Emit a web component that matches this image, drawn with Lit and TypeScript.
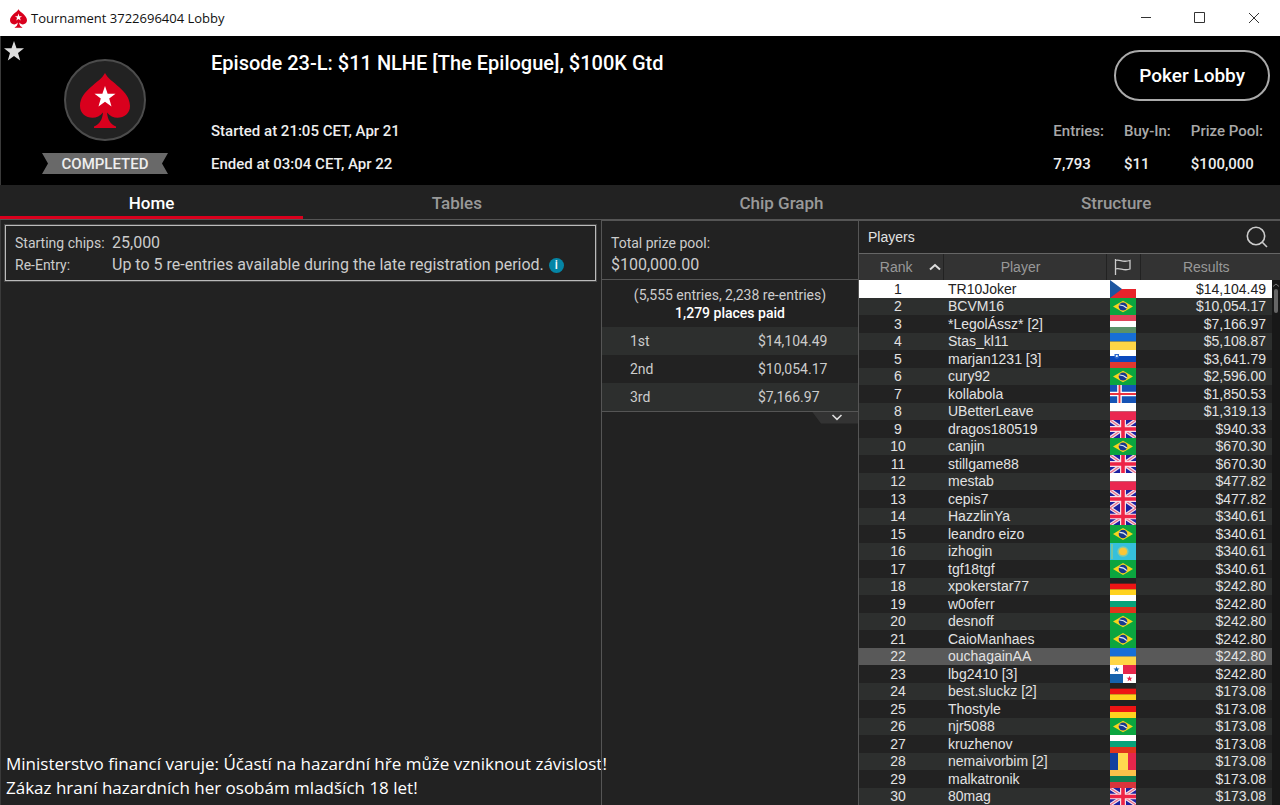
import { LitElement, html, svg, css, TemplateResult } from "lit";
import { customElement, property, state } from "lit/decorators.js";
import { classMap } from "lit/directives/class-map.js";

type Player = [name: string, flag: string, result: string];

const PLAYERS: Player[] = [
  ["TR10Joker", "cz", "$14,104.49"],
  ["BCVM16", "br", "$10,054.17"],
  ["*LegolÁssz* [2]", "hu", "$7,166.97"],
  ["Stas_kl11", "ua", "$5,108.87"],
  ["marjan1231 [3]", "si", "$3,641.79"],
  ["cury92", "br", "$2,596.00"],
  ["kollabola", "is", "$1,850.53"],
  ["UBetterLeave", "pl", "$1,319.13"],
  ["dragos180519", "gb", "$940.33"],
  ["canjin", "br", "$670.30"],
  ["stillgame88", "gb", "$670.30"],
  ["mestab", "pl", "$477.82"],
  ["cepis7", "gb", "$477.82"],
  ["HazzlinYa", "gb", "$340.61"],
  ["leandro eizo", "br", "$340.61"],
  ["izhogin", "kz", "$340.61"],
  ["tgf18tgf", "br", "$340.61"],
  ["xpokerstar77", "de", "$242.80"],
  ["w0oferr", "bg", "$242.80"],
  ["desnoff", "br", "$242.80"],
  ["CaioManhaes", "br", "$242.80"],
  ["ouchagainAA", "ua", "$242.80"],
  ["lbg2410 [3]", "pa", "$242.80"],
  ["best.sluckz [2]", "de", "$173.08"],
  ["Thostyle", "de", "$173.08"],
  ["njr5088", "br", "$173.08"],
  ["kruzhenov", "bg", "$173.08"],
  ["nemaivorbim [2]", "ro", "$173.08"],
  ["malkatronik", "lt", "$173.08"],
  ["80mag", "gb", "$173.08"],
];

const bands = (a: string, b: string, c: string) => svg`
  <rect width="26" height="6" fill=${a}></rect>
  <rect y="6" width="26" height="6" fill=${b}></rect>
  <rect y="12" width="26" height="6" fill=${c}></rect>`;

const halves = (a: string, b: string) => svg`
  <rect width="26" height="9" fill=${a}></rect>
  <rect y="9" width="26" height="9" fill=${b}></rect>`;

const FLAGS: Record<string, TemplateResult<2>> = {
  cz: svg`${halves("#ffffff", "#e8232b")}<path d="M0 0L12 9L0 18Z" fill="#1d56a0"></path>`,
  br: svg`
    <rect width="26" height="18" fill="#0ba53f"></rect>
    <path d="M3 9L13 3L23 9L13 15Z" fill="#f7d51d"></path>
    <circle cx="13" cy="9" r="4.3" fill="#17398f"></circle>
    <path d="M9.3 7.4Q13.5 7.2 16.8 10.6" stroke="#dfe8ee" stroke-width="1.2" fill="none"></path>`,
  hu: bands("#e0445a", "#ffffff", "#5a9168"),
  ua: halves("#176fd6", "#ffd646"),
  si: svg`${bands("#ffffff", "#0b49bd", "#e0382f")}
    <path d="M4.5 4H9V7.5Q6.8 10 4.5 7.5Z" fill="#2d69cf"></path>
    <circle cx="6.8" cy="6" r="1.1" fill="#ffffff"></circle>`,
  is: svg`
    <rect width="26" height="18" fill="#1553b5"></rect>
    <path d="M9.5 0V18M0 9H26" stroke="#ffffff" stroke-width="4.6"></path>
    <path d="M9.5 0V18M0 9H26" stroke="#ef3340" stroke-width="1.9"></path>`,
  pl: halves("#ffffff", "#ea2850"),
  gb: svg`
    <rect width="26" height="18" fill="#1c20a0"></rect>
    <path d="M0 0L26 18M26 0L0 18" stroke="#f3e3ee" stroke-width="3.6"></path>
    <path d="M0 0L26 18M26 0L0 18" stroke="#ea6d86" stroke-width="1.2"></path>
    <path d="M13 0V18M0 9H26" stroke="#f7dfe8" stroke-width="6"></path>
    <path d="M13 0V18M0 9H26" stroke="#ee2346" stroke-width="3.6"></path>`,
  kz: svg`
    <rect width="26" height="18" fill="#35c0dc"></rect>
    <path d="M2 1V17" stroke="#8fc78a" stroke-width="1.4"></path>
    <circle cx="13" cy="9" r="5.6" fill="#86c9a4"></circle>
    <circle cx="13" cy="9" r="4" fill="#fbc637"></circle>`,
  de: bands("#222222", "#ee1414", "#ffd21f"),
  bg: bands("#ffffff", "#07a37a", "#e0341c"),
  pa: svg`
    <rect width="26" height="18" fill="#ffffff"></rect>
    <path d="M13 0H26V9H13Z" fill="#e6264b"></path>
    <path d="M0 9H13V18H0Z" fill="#1562ad"></path>
    <path d="M6.5 1.5L7.3 3.6H9.5L7.8 4.9L8.4 7L6.5 5.7L4.6 7L5.2 4.9L3.5 3.6H5.7Z" fill="#1562ad"></path>
    <path d="M19.5 10.7L20.3 12.8H22.5L20.8 14.1L21.4 16.2L19.5 14.9L17.6 16.2L18.2 14.1L16.5 12.8H18.7Z" fill="#e6264b"></path>`,
  ro: svg`
    <rect width="9" height="18" fill="#12409f"></rect>
    <rect x="8" width="10" height="18" fill="#ffd94f"></rect>
    <rect x="18" width="8" height="18" fill="#e6264b"></rect>`,
  lt: bands("#fcc24a", "#12804f", "#d8343c"),
};

const SPADE = "M25 0C30 10 50 17 50 33C50 45 34 49 27 39.500C27.500 46 30 51 36 53.500V55H14V53.500C20 51 22.500 46 23 39.500C16 49 0 45 0 33C0 17 20 10 25 0Z";
const STAR = "M10 0L12.500 7.300H20L14 11.900L16.200 19.500L10 15L3.800 19.500L6 11.900L0 7.300H7.500Z";

@customElement("spade-logo")
export class SpadeLogo extends LitElement {
  static styles = css`
    :host { display: block; }
    svg { display: block; width: 100%; height: 100%; }
  `;
  render() {
    return html`<svg viewBox="0 0 50 55" aria-hidden="true">
      <path d=${SPADE} fill="#d9001d"></path>
      <path d=${STAR} fill="#fff" transform="translate(14.500 13) scale(1.050)"></path>
    </svg>`;
  }
}

@customElement("title-bar")
export class TitleBar extends LitElement {
  static styles = css`
    :host {
      display: flex; align-items: center; height: 36px; background: #fff; color: #111;
      font: 13px/20px "Open Sans", "Noto Sans", sans-serif;
    }
    .logo { width: 17px; height: 19px; margin: 0 4px 0 10px; }
    h1 { flex: 1; margin: 0; font: inherit; }
    button { width: 54px; height: 36px; padding: 0 0 0 2px; border: 0; background: none; display: grid; place-items: center; }
    svg { width: 12px; height: 12px; fill: none; stroke: #333; }
  `;
  render() {
    return html`
      <spade-logo class="logo"></spade-logo>
      <h1>Tournament 3722696404 Lobby</h1>
      <button aria-label="Minimize"><svg viewBox="0 0 12 12"><path d="M1 5.500H11"></path></svg></button>
      <button aria-label="Maximize"><svg viewBox="0 0 12 12"><path d="M.5 .5H10.500V10.500H.5Z"></path></svg></button>
      <button aria-label="Close"><svg viewBox="0 0 12 12"><path d="M1 1L11 11M11 1L1 11"></path></svg></button>
    `;
  }
}

@customElement("lobby-header")
export class LobbyHeader extends LitElement {
  static styles = css`
    :host {
      position: relative;
      display: grid; grid-template-columns: 208px 1fr auto;
      box-sizing: border-box; height: 149px; padding-right: 10px;
      border-left: 1px solid #3a3a3a;
      background: #000; color: #eee;
      font: 500 15px/20px Roboto, sans-serif;
    }
    .fav { position: absolute; left: 2px; top: 4px; width: 22px; height: 22px; padding: 1px; border: 0; background: none; }
    .fav svg { display: block; width: 20px; height: 20px; fill: #ddd; }
    .badge { display: flex; flex-direction: column; align-items: center; padding-top: 23px; }
    .disc {
      display: grid; place-items: center; box-sizing: border-box;
      width: 82px; height: 82px; border: 2px solid #4c4c4c; border-radius: 50%; background: #222;
    }
    .disc spade-logo { width: 50px; height: 55px; }
    .ribbon {
      width: 126px; margin-top: 12px; padding-top: 1px; text-align: center; background: #696969;
      clip-path: polygon(0 0, 100% 0, calc(100% - 6px) 50%, 100% 100%, 0 100%, 6px 50%);
    }
    .info { padding: 13px 0 0 2px; }
    h2 { margin: 0 0 44px; font: 500 20px/28px Roboto, sans-serif; color: #fff; }
    p { margin: 0 0 13px; }
    .side { padding-top: 14px; display: flex; flex-direction: column; align-items: flex-end; }
    .lobby {
      height: 51px; padding: 0 23px; border: 2px solid #aaa; border-radius: 26px;
      background: none; color: #fff; font: 500 19px/24px Roboto, sans-serif;
    }
    dl { display: flex; gap: 20px; margin: 20px 7px 0 0; }
    dt { color: #a8a8a8; margin-bottom: 13px; }
    dd { margin: 0; }
  `;
  render() {
    const stats = [["Entries:", "7,793"], ["Buy-In:", "$11"], ["Prize Pool:", "$100,000"]];
    return html`
      <div class="badge">
        <div class="disc"><spade-logo></spade-logo></div>
        <div class="ribbon">COMPLETED</div>
      </div>
      <div class="info">
        <h2>Episode 23-L: $11 NLHE [The Epilogue], $100K Gtd</h2>
        <p>Started at 21:05 CET, Apr 21</p>
        <p>Ended at 03:04 CET, Apr 22</p>
      </div>
      <div class="side">
        <button class="lobby">Poker Lobby</button>
        <dl>${stats.map(([k, v]) => html`<div><dt>${k}</dt><dd>${v}</dd></div>`)}</dl>
      </div>
      <button class="fav" aria-label="Favourite"><svg viewBox="0 0 20 20"><path d=${STAR}></path></svg></button>
    `;
  }
}

@customElement("tab-bar")
export class TabBar extends LitElement {
  @property({ type: Array }) tabs: string[] = [];
  @state() private active = 0;
  static styles = css`
    :host { display: block; background: #222; border-bottom: 1px solid #555; }
    nav { display: flex; }
    button {
      flex: 1 1 auto; height: 34px; padding: 4px 0 0; border: 0; border-bottom: 3px solid transparent;
      background: none; color: #999; font: 500 17px/24px Roboto, sans-serif;
    }
    .active { color: #fff; border-bottom-color: #d9001d; }
  `;
  render() {
    return html`<nav role="tablist">${this.tabs.map((t, i) => html`
      <button role="tab" aria-selected=${i === this.active} class=${classMap({ active: i === this.active })}
        @click=${() => (this.active = i)}>${t}</button>`)}</nav>`;
  }
}

@customElement("prize-panel")
export class PrizePanel extends LitElement {
  static styles = css`
    :host { display: block; font: 14px/20px Roboto, sans-serif; color: #ccc; }
    .total { padding: 12px 9px 4px; border-bottom: 1px solid #555; }
    .total span { display: block; line-height: 21px; }
    .total .amount { font-size: 16px; }
    .summary { padding: 6px 0 5px; text-align: center; line-height: 18px; }
    .summary strong { display: block; font-weight: 500; color: #fff; }
    table { width: 100%; border-collapse: collapse; table-layout: fixed; border-bottom: 1px solid #555; }
    tr { height: 28px; }
    tr:nth-child(odd) { background: #2d2f2e; }
    th { padding: 0 0 0 28px; width: 50%; text-align: left; font-weight: 400; }
    td { padding: 0; }
    .more {
      display: grid; place-items: center; width: 46px; height: 12px; margin-left: auto; padding: 0 0 0 4px; border: 0;
      background: #333; clip-path: polygon(0 0, 100% 0, 100% 100%, 9px 100%);
    }
    .more svg { width: 12px; height: 7px; fill: none; stroke: #ddd; stroke-width: 1.600; }
  `;
  render() {
    const prizes = [["1st", "$14,104.49"], ["2nd", "$10,054.17"], ["3rd", "$7,166.97"]];
    return html`
      <div class="total"><span>Total prize pool:</span><span class="amount">$100,000.00</span></div>
      <div class="summary">(5,555 entries, 2,238 re-entries)<strong>1,279 places paid</strong></div>
      <table><tbody>${prizes.map(([p, a]) => html`<tr><th scope="row">${p}</th><td>${a}</td></tr>`)}</tbody></table>
      <button class="more" aria-label="Show more prizes"><svg viewBox="0 0 12 7"><path d="M1.500 1L6 5.300L10.500 1"></path></svg></button>
    `;
  }
}

@customElement("player-list")
export class PlayerList extends LitElement {
  @property({ type: Array }) players: Player[] = [];
  @property({ type: Number }) highlighted = 0;
  static styles = css`
    :host { display: flex; flex-direction: column; min-height: 0; color: #e2e2e2; font: 14px/17px "Liberation Sans", Arial, sans-serif; }
    header { display: flex; align-items: center; justify-content: space-between; height: 32px; padding: 0 12px 0 9px; border-bottom: 1px solid #666; }
    h2 { margin: 0; font: inherit; }
    .search { width: 22px; height: 24px; padding: 0; border: 0; background: none; }
    .search svg { display: block; width: 22px; height: 22px; fill: none; stroke: #ccc; stroke-width: 1.600; }
    .body { flex: 1; display: flex; min-height: 0; overflow: hidden; }
    table { flex: 1; border-collapse: collapse; table-layout: fixed; align-self: flex-start; }
    .c-rank { width: 84px; }
    .c-flag { width: 34px; }
    .c-result { width: 132px; }
    td, th { padding: 0; font-weight: 400; }
    thead tr { height: 26px; background: #333; color: #999; }
    thead th { border-right: 1px solid #222; }
    thead th:last-child { border-right: 0; }
    thead .player { padding-right: 8px; }
    .sort { display: flex; align-items: center; justify-content: flex-end; width: 100%; gap: 16px; padding: 0 2px 0 0; border: 0; background: none; color: inherit; font: inherit; }
    .sort svg { width: 12px; height: 8px; fill: none; stroke: #ddd; stroke-width: 2; }
    .flag-head { display: block; width: 18px; height: 16px; margin: 0 auto; fill: none; stroke: #ccc; stroke-width: 1.300; }
    tbody tr { height: 17px; background: #222; }
    tbody tr:nth-child(odd) { height: 18px; }
    tbody tr:nth-child(even) { background: #2d2f2e; }
    tbody tr.first { background: #fff; color: #222; }
    tbody tr.own:nth-child(n) { background: #595959; }
    .rank { text-align: center; padding-right: 6px; }
    .name { padding-left: 5px; white-space: nowrap; }
    .result { text-align: right; padding-right: 6px; }
    .flag { display: block; width: 26px; height: 17px; margin: 0 auto; }
    tr:nth-child(odd) .flag { height: 18px; }
    .scroll { width: 8px; background: #181818; }
    .scroll-head { height: 26px; background: #333; }
    .scroll svg { display: block; width: 8px; height: 9px; fill: none; stroke: #777; }
    .thumb { width: 4px; height: 24px; margin: 0 auto; border-radius: 2px; background: #666; }
  `;
  render() {
    return html`
      <header>
        <h2>Players</h2>
        <button class="search" aria-label="Search players">
          <svg viewBox="0 0 22 22"><circle cx="10" cy="10" r="8.700"></circle><path d="M16.300 16.300L21 21"></path></svg>
        </button>
      </header>
      <div class="body">
        <table>
          <colgroup><col class="c-rank"><col><col class="c-flag"><col class="c-result"></colgroup>
          <thead><tr>
            <th scope="col" aria-sort="ascending"><button class="sort">Rank
              <svg viewBox="0 0 12 8" aria-hidden="true"><path d="M1 6.500L6 2L11 6.500"></path></svg></button></th>
            <th scope="col" class="player">Player</th>
            <th scope="col" aria-label="Country"><svg class="flag-head" viewBox="0 0 18 16">
              <path d="M1.500 0V16M1.500 1.500C6 0 8 4 16 1.500V10C10 12.500 6 8.500 1.500 10"></path></svg></th>
            <th scope="col">Results</th>
          </tr></thead>
          <tbody>${this.players.map(([name, flag, result], i) => html`
            <tr class=${classMap({ first: i === 0, own: i + 1 === this.highlighted })}>
              <td class="rank">${i + 1}</td>
              <td class="name">${name}</td>
              <td><svg class="flag" viewBox="0 0 26 18" preserveAspectRatio="none" role="img" aria-label=${flag}>${FLAGS[flag]}</svg></td>
              <td class="result">${result}</td>
            </tr>`)}</tbody>
        </table>
        <div class="scroll">
          <div class="scroll-head"></div>
          <svg viewBox="0 0 8 9"><path d="M1 6.500L4 4L7 6.500"></path></svg>
          <div class="thumb"></div>
        </div>
      </div>
    `;
  }
}

@customElement("app-root")
export class AppRoot extends LitElement {
  static styles = css`
    :host { display: flex; flex-direction: column; height: 100vh; overflow: hidden; background: #222; color: #ddd; }
    main {
      flex: 1; min-height: 0; display: grid; grid-template: minmax(0, 1fr) / minmax(0, 600fr) minmax(0, 257fr) minmax(0, 422fr);
      border-left: 1px solid #3a3a3a; box-sizing: border-box;
    }
    .home { display: flex; flex-direction: column; padding: 5px 5px 5px 4px; }
    .rules {
      display: grid; grid-template-columns: 97px 1fr; margin: 0; padding: 6px 9px 4px;
      border: 1px solid #bbb; outline: 1px solid #484848;
      color: #ccc; font: 14px/22px Roboto, sans-serif;
    }
    .rules dd { display: flex; align-items: center; gap: 5px; margin: 0; font-size: 16px; white-space: nowrap; }
    .tip { display: grid; place-items: center; width: 15px; height: 15px; padding: 0; border: 0; border-radius: 50%; background: #0585a5; color: #fff; font: 500 12px/15px Roboto, sans-serif; }
    .warning { margin: auto 0 0 1px; color: #fff; font: 17px/24px "Open Sans", "Noto Sans", sans-serif; white-space: nowrap; }
    prize-panel, player-list { border-left: 1px solid #555; border-top: 1px solid #555; }
  `;
  render() {
    return html`
      <title-bar></title-bar>
      <lobby-header></lobby-header>
      <tab-bar .tabs=${["Home", "Tables", "Chip Graph", "Structure"]}></tab-bar>
      <main>
        <section class="home">
          <dl class="rules">
            <dt>Starting chips:</dt><dd>25,000</dd>
            <dt>Re-Entry:</dt>
            <dd>Up to 5 re-entries available during the late registration period.
              <button class="tip" aria-label="Re-entry details">i</button></dd>
          </dl>
          <div class="warning">
            Ministerstvo financí varuje: Účastí na hazardní hře může vzniknout závislost!<br>
            Zákaz hraní hazardních her osobám mladších 18 let!
          </div>
        </section>
        <prize-panel></prize-panel>
        <player-list .players=${PLAYERS} .highlighted=${22}></player-list>
      </main>
    `;
  }
}
